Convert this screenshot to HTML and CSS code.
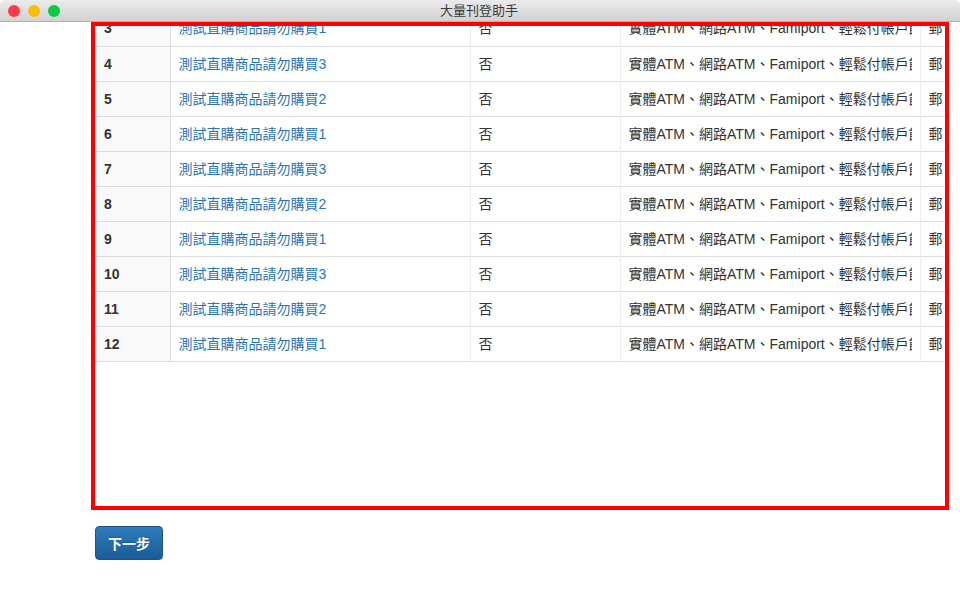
FILE: index.html
```html
<!DOCTYPE html>
<html lang="zh-Hant">
<head>
<meta charset="utf-8">
<title>大量刊登助手</title>
<link rel="stylesheet" href="styles.css">
</head>
<body>
<header class="titlebar">
  <div class="lights"><span class="light red"></span><span class="light yellow"></span><span class="light green"></span></div>
  <div class="title">大量刊登助手</div>
</header>
<main class="main">
  <div class="frame">
    <table class="grid">
      <colgroup><col class="c1"><col class="c2"><col class="c3"><col class="c4"><col class="c5"></colgroup>
      <tbody>
        <tr><th>3</th><td><a href="#">測試直購商品請勿購買1</a></td><td>否</td><td><div class="clip">實體ATM、網路ATM、Famiport、輕鬆付帳戶餘額</div></td><td><div class="clip">郵局</div></td></tr>
        <tr><th>4</th><td><a href="#">測試直購商品請勿購買3</a></td><td>否</td><td><div class="clip">實體ATM、網路ATM、Famiport、輕鬆付帳戶餘額</div></td><td><div class="clip">郵局</div></td></tr>
        <tr><th>5</th><td><a href="#">測試直購商品請勿購買2</a></td><td>否</td><td><div class="clip">實體ATM、網路ATM、Famiport、輕鬆付帳戶餘額</div></td><td><div class="clip">郵局</div></td></tr>
        <tr><th>6</th><td><a href="#">測試直購商品請勿購買1</a></td><td>否</td><td><div class="clip">實體ATM、網路ATM、Famiport、輕鬆付帳戶餘額</div></td><td><div class="clip">郵局</div></td></tr>
        <tr><th>7</th><td><a href="#">測試直購商品請勿購買3</a></td><td>否</td><td><div class="clip">實體ATM、網路ATM、Famiport、輕鬆付帳戶餘額</div></td><td><div class="clip">郵局</div></td></tr>
        <tr><th>8</th><td><a href="#">測試直購商品請勿購買2</a></td><td>否</td><td><div class="clip">實體ATM、網路ATM、Famiport、輕鬆付帳戶餘額</div></td><td><div class="clip">郵局</div></td></tr>
        <tr><th>9</th><td><a href="#">測試直購商品請勿購買1</a></td><td>否</td><td><div class="clip">實體ATM、網路ATM、Famiport、輕鬆付帳戶餘額</div></td><td><div class="clip">郵局</div></td></tr>
        <tr><th>10</th><td><a href="#">測試直購商品請勿購買3</a></td><td>否</td><td><div class="clip">實體ATM、網路ATM、Famiport、輕鬆付帳戶餘額</div></td><td><div class="clip">郵局</div></td></tr>
        <tr><th>11</th><td><a href="#">測試直購商品請勿購買2</a></td><td>否</td><td><div class="clip">實體ATM、網路ATM、Famiport、輕鬆付帳戶餘額</div></td><td><div class="clip">郵局</div></td></tr>
        <tr><th>12</th><td><a href="#">測試直購商品請勿購買1</a></td><td>否</td><td><div class="clip">實體ATM、網路ATM、Famiport、輕鬆付帳戶餘額</div></td><td><div class="clip">郵局</div></td></tr>
      </tbody>
    </table>
  </div>
  <button class="next" type="button">下一步</button>
</main>
</body>
</html>
```
FILE: styles.css
```css
* { box-sizing: border-box; }
html, body { margin: 0; height: 100%; overflow: hidden; background: #fff; }
body { font-family: "Liberation Sans", "Noto Sans CJK TC", sans-serif; font-size: 14px; color: #333; }

.titlebar {
  height: 22px;
  padding-right: 2px;
  display: flex;
  align-items: center;
  justify-content: center;
  position: relative;
  background: linear-gradient(#ebebeb, #d2d2d2);
  border-bottom: 1px solid #b1b1b1;
  border-radius: 5px 5px 0 0;
}
.title { font-size: 13px; color: #3a3a3a; line-height: 21px; }
.lights { position: absolute; left: 8px; top: 5px; display: flex; gap: 8px; }
.light { width: 12px; height: 12px; border-radius: 50%; }
.red { background: #fc3d48; }
.yellow { background: #fdbc0a; }
.green { background: #0bcb45; }

.main { padding-left: 91px; display: flex; flex-direction: column; align-items: flex-start; }
.frame {
  width: 858px;
  height: 488px;
  border: 4px solid #f00;
  overflow: hidden;
}
.grid {
  table-layout: fixed;
  width: 850px;
  border-collapse: collapse;
  margin-top: -15px;
}
.c1 { width: 75px; }
.c2 { width: 300px; }
.c3 { width: 150px; }
.c4 { width: 300px; }
.c5 { width: 25px; }
.grid tr { height: 35px; border-bottom: 1px solid #ddd; }
.grid th, .grid td {
  padding: 0 8px;
  white-space: nowrap;
  text-align: left;
  font-size: 14px;
  line-height: 20px;
  border-right: 1px solid #eee;
}
.grid th { padding-left: 9px; background: #f9f9f9; font-weight: bold; border-right-color: #ddd; }
.grid td:last-child { padding-right: 0; border-right-color: #e4e4e4; }
.grid td:last-child .clip { width: 14px; }
.clip { overflow: hidden; white-space: nowrap; }
.grid a { color: #2a76b5; text-decoration: none; }

.next {
  margin: 16px 0 0 4px;
  width: 68px;
  height: 34px;
  padding: 0;
  border: 1px solid #1c5488;
  border-radius: 4px;
  background: linear-gradient(#2e7cba, #1b5c96);
  color: #fff;
  font: bold 14px "Liberation Sans", "Noto Sans CJK TC", sans-serif;
  text-shadow: 0 -1px 0 rgba(0, 0, 0, .2);
}
```
